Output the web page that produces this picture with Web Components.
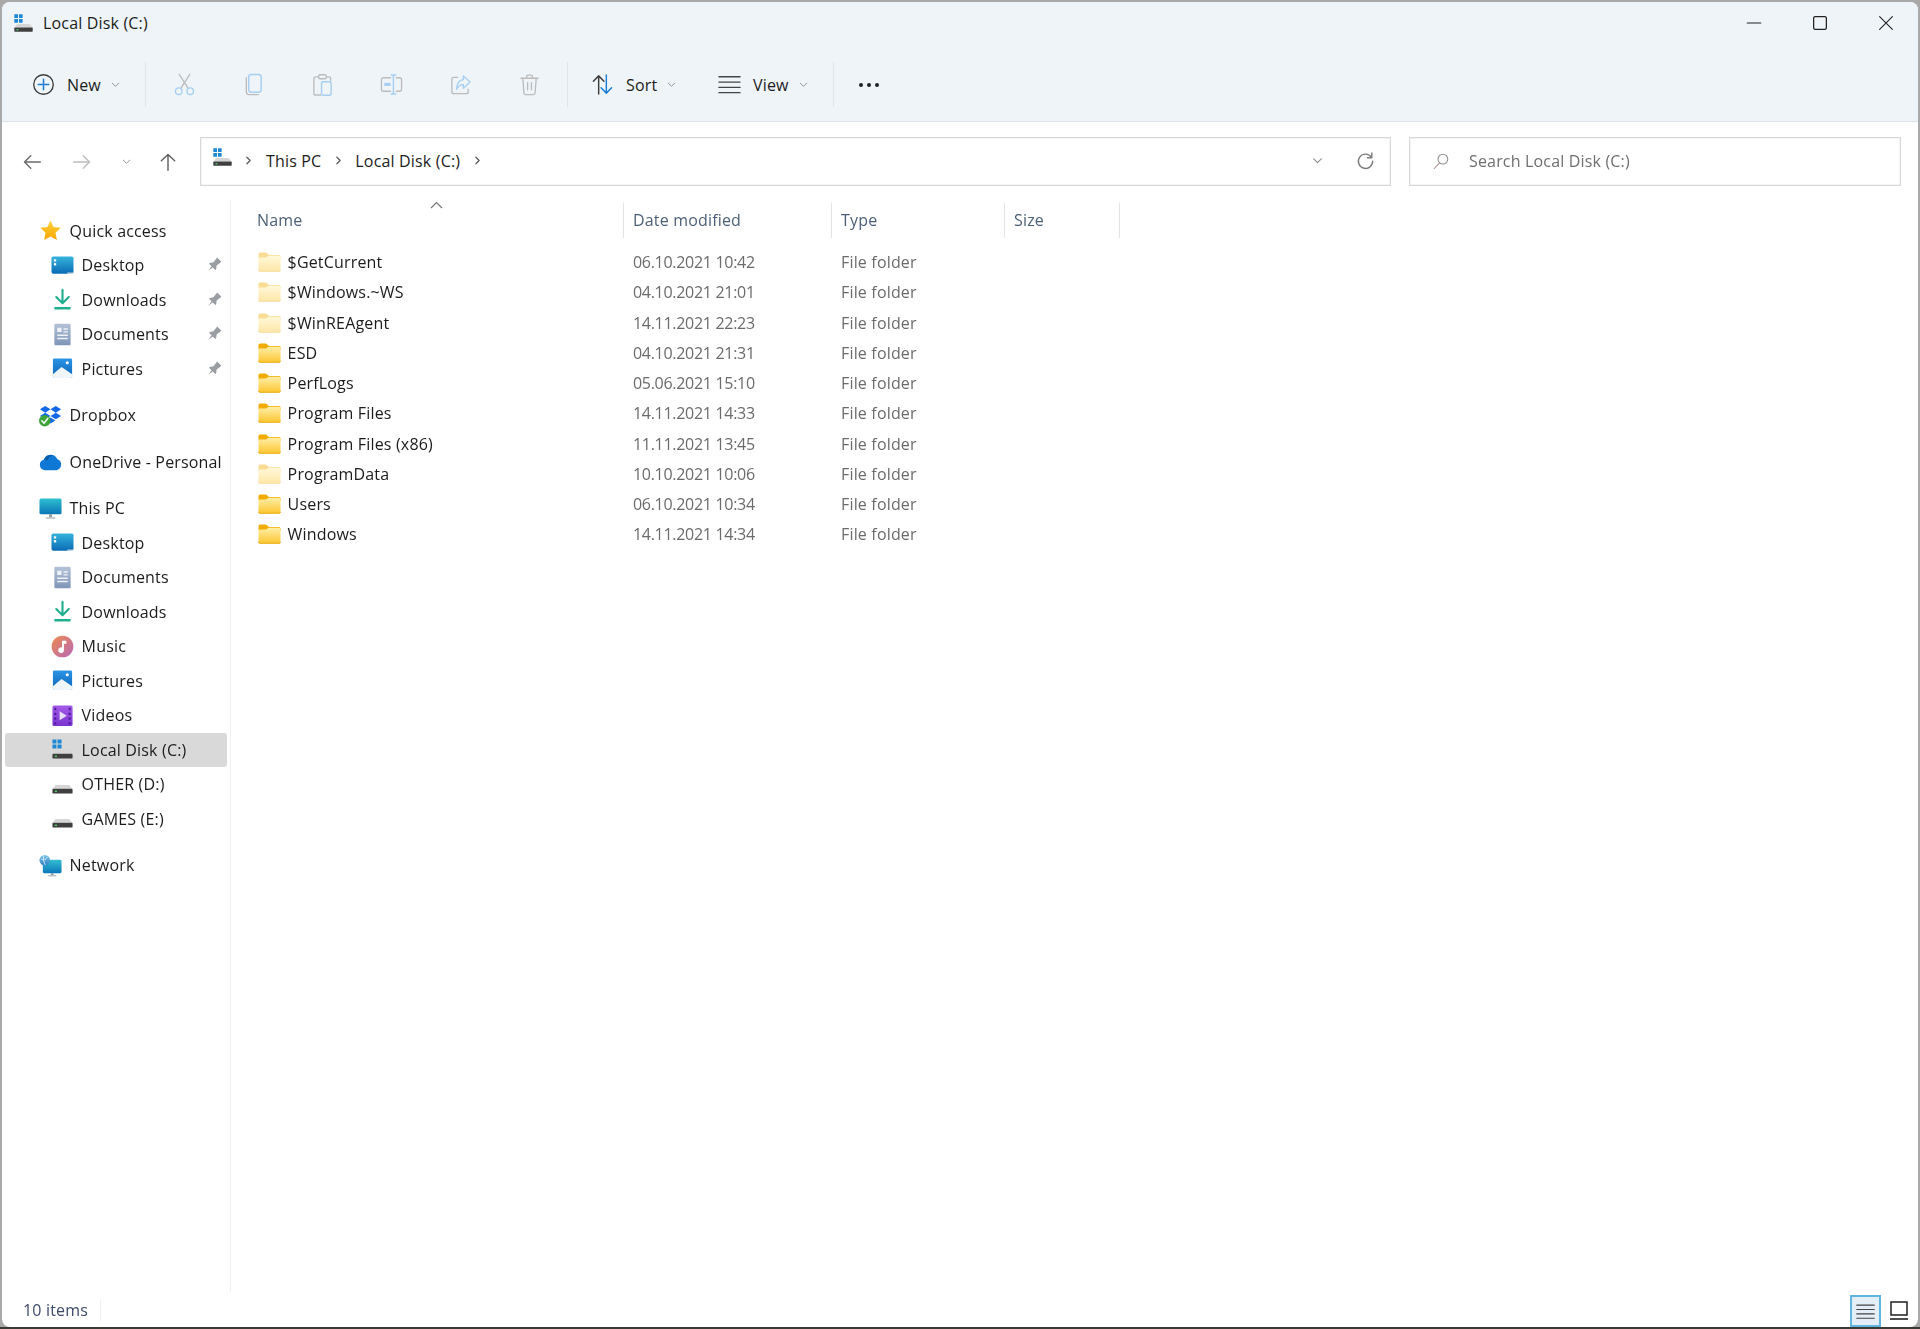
<!DOCTYPE html>
<html lang="en">
<head>
<meta charset="utf-8">
<title>Local Disk (C:)</title>
<style>
  html, body { margin: 0; height: 100%; }
  body {
    overflow: hidden;
    padding: 2px;
    box-sizing: border-box;
    background: linear-gradient(#a9a9a9 1327px, #3a3a35 0);
    font-family: "Open Sans", "Noto Sans", sans-serif;
    font-size: 16px;
    letter-spacing: .17px;
    color: #1c1c1c;
  }
</style>
</head>
<body>
<explorer-window>
  <title-bar slot="top">Local Disk (C:)</title-bar>
  <command-bar slot="top"></command-bar>
  <address-row slot="address"></address-row>
  <nav-pane slot="nav">
    <nav-item icon="star">Quick access</nav-item>
    <nav-item icon="desktop" child pin>Desktop</nav-item>
    <nav-item icon="downloads" child pin>Downloads</nav-item>
    <nav-item icon="documents" child pin>Documents</nav-item>
    <nav-item icon="pictures" child pin>Pictures</nav-item>
    <nav-item icon="dropbox" group>Dropbox</nav-item>
    <nav-item icon="onedrive" group>OneDrive - Personal</nav-item>
    <nav-item icon="thispc" group>This PC</nav-item>
    <nav-item icon="desktop" child>Desktop</nav-item>
    <nav-item icon="documents" child>Documents</nav-item>
    <nav-item icon="downloads" child>Downloads</nav-item>
    <nav-item icon="music" child>Music</nav-item>
    <nav-item icon="pictures" child>Pictures</nav-item>
    <nav-item icon="videos" child>Videos</nav-item>
    <nav-item icon="windrive" child selected>Local Disk (C:)</nav-item>
    <nav-item icon="drive" child>OTHER (D:)</nav-item>
    <nav-item icon="drive" child>GAMES (E:)</nav-item>
    <nav-item icon="network" group>Network</nav-item>
  </nav-pane>
  <file-list slot="files">
    <file-row hidden-file date="06.10.2021 10:42">$GetCurrent</file-row>
    <file-row hidden-file date="04.10.2021 21:01">$Windows.~WS</file-row>
    <file-row hidden-file date="14.11.2021 22:23">$WinREAgent</file-row>
    <file-row date="04.10.2021 21:31">ESD</file-row>
    <file-row date="05.06.2021 15:10">PerfLogs</file-row>
    <file-row date="14.11.2021 14:33">Program Files</file-row>
    <file-row date="11.11.2021 13:45">Program Files (x86)</file-row>
    <file-row hidden-file date="10.10.2021 10:06">ProgramData</file-row>
    <file-row date="06.10.2021 10:34">Users</file-row>
    <file-row date="14.11.2021 14:34">Windows</file-row>
  </file-list>
  <status-bar slot="status">10 items</status-bar>
</explorer-window>

<script>
// all the icons, on a 24 box unless the name says otherwise
const GRAY = '#bcbcbc', PALE = '#a6cef2', DARK = '#3d3d3d', BLUE = '#1a7fd4';
const line = (d, c, w = 1.4) => `<path d="${d}" fill="none" stroke="${c}" stroke-width="${w}" stroke-linecap="round" stroke-linejoin="round"/>`;
const grad = (id, a, b, x2 = 0, y2 = 1) => `<linearGradient id="${id}" x1="0" y1="0" x2="${x2}" y2="${y2}"><stop offset="0" stop-color="${a}"/><stop offset="1" stop-color="${b}"/></linearGradient>`;

const driveBody = `
  <path d="M5 12.5 H19 L22.5 16.5 H1.5 Z" fill="#d6d6d6"/>
  <rect x="1.5" y="16.5" width="21" height="5" rx="1" fill="#3f3f3f"/>
  <rect x="4" y="18.4" width="2.2" height="1.4" fill="#4fd16b"/>`;

const ICONS = {
  plus: `<circle cx="12" cy="12" r="10.2" fill="none" stroke="${DARK}" stroke-width="1.4"/>` + line('M12 6.5 V17.5 M6.5 12 H17.5', BLUE, 1.6),
  cut: line('M6.5 1.5 L15.5 15.5 M17.5 1.5 L8.5 15.5', GRAY) + `<circle cx="6" cy="19" r="3.4" fill="none" stroke="${PALE}" stroke-width="1.4"/><circle cx="18" cy="19" r="3.4" fill="none" stroke="${PALE}" stroke-width="1.4"/>`,
  copy: line('M4.5 5 V19.5 A3 3 0 0 0 7.5 22.5 H17', GRAY) + `<rect x="7" y="1.5" width="13" height="18.5" rx="2.8" fill="none" stroke="${PALE}" stroke-width="1.5"/>`,
  paste: line('M8 4 H5 A2 2 0 0 0 3 6 V21 A2 2 0 0 0 5 23 H10 M16 4 H18.5 A2 2 0 0 1 20.5 6 V8', GRAY) + `<rect x="8" y="1.8" width="8" height="4.2" rx="1.6" fill="none" stroke="${GRAY}" stroke-width="1.4"/><rect x="11" y="9.2" width="10" height="14" rx="1.6" fill="none" stroke="${PALE}" stroke-width="1.5"/>`,
  rename: line('M11 5 H3.5 A2 2 0 0 0 1.5 7 V17 A2 2 0 0 0 3.5 19 H11 M17 5 H20.5 A2 2 0 0 1 22.5 7 V17 A2 2 0 0 1 20.5 19 H17', GRAY) + line('M14 2 V22 M11.5 2 H16.5 M11.5 22 H16.5', PALE, 1.5) + `<rect x="4.5" y="10.3" width="6.5" height="3.2" fill="${PALE}"/>`,
  share: line('M9 4.5 H5 A2 2 0 0 0 3 6.5 V19.5 A2 2 0 0 0 5 21.5 H18 A2 2 0 0 0 20 19.5 V17', GRAY) + line('M15 3 L22 9.5 L15 16 V12.2 C11.5 12 9.5 14 8 17 C8 11 10.5 7.6 15 7 Z', PALE),
  trash: line('M3 5.5 H21 M9 5.5 V3.6 A1.4 1.4 0 0 1 10.4 2.2 H13.6 A1.4 1.4 0 0 1 15 3.6 V5.5 M5 5.5 L6.2 21 A1.8 1.8 0 0 0 8 22.6 H16 A1.8 1.8 0 0 0 17.8 21 L19 5.5 M10 10 V17.5 M14 10 V17.5', GRAY),
  sort: line('M8 22 V3 M2.5 8.5 L8 3 L13.5 8.5', DARK, 1.5) + line('M16 2 V21 M10.5 15.5 L16 21 L21.5 15.5', BLUE, 1.5),
  lines: line('M1 4 H23 M1 9.5 H23 M1 15 H23 M1 20.5 H23', '#444', 1.5),
  dots: `<circle cx="4" cy="12" r="2" fill="#222"/><circle cx="12" cy="12" r="2" fill="#222"/><circle cx="20" cy="12" r="2" fill="#222"/>`,
  chevron: line('M5 9 L12 16 L19 9', '#8a8a8a', 2),
  back: line('M22 12 H3 M10.5 4.5 L3 12 L10.5 19.5', '#6b6b6b', 1.7),
  forward: line('M2 12 H21 M13.5 4.5 L21 12 L13.5 19.5', '#bdbdbd', 1.7),
  up: line('M12 22 V3 M4 10.5 L12 3 L20 10.5', '#5f5f5f', 1.7),
  crumb: line('M9 6 L15 12 L9 18', '#555', 2.2),
  refresh: line('M19.5 8 A9 9 0 1 0 21 13', '#7d7d7d', 1.8) + line('M20 2.5 V8.5 H14.5', '#7d7d7d', 1.8),
  search: `<circle cx="14.5" cy="9.5" r="6.5" fill="none" stroke="#8d8d8d" stroke-width="1.4"/>` + line('M10 14.5 L3 22', '#a68f8f', 1.4),
  minimize: line('M3 12 H21', '#222', 1.6),
  maximize: `<rect x="3.5" y="3.5" width="17" height="17" rx="2.2" fill="none" stroke="#222" stroke-width="1.7"/>`,
  close: line('M3.5 3.5 L20.5 20.5 M20.5 3.5 L3.5 20.5', '#222', 1.5),
  pin: `<g transform="rotate(45 12 12)"><path d="M8 2 H16 L15 10 L18 14 V15.5 H13 L12 23 L11 15.5 H6 V14 L9 10 Z" fill="#9a9ea3"/></g>`,
  star: `<defs>${grad('s', '#ffd23f', '#f7a600')}</defs><path d="M12 1.5 L15.2 8.3 L22.7 9.2 L17.2 14.4 L18.6 21.8 L12 18.2 L5.4 21.8 L6.8 14.4 L1.3 9.2 L8.8 8.3 Z" fill="url(#s)"/>`,
  desktop: `<defs>${grad('d', '#35b4dc', '#0b6bb5')}</defs><rect x="0.5" y="2.5" width="23" height="18" rx="2" fill="url(#d)"/><rect x="3" y="5.5" width="2.4" height="2.4" fill="#fff"/><rect x="3" y="9.5" width="2.4" height="2.4" fill="#fff"/><rect x="17" y="19.4" width="6.5" height="1.2" fill="#dfe9ef"/>`,
  downloads: line('M12 2 V15.5 M5.5 9.5 L12 16 L18.5 9.5', '#1fae8e', 2.2) + `<rect x="3.5" y="19.8" width="17" height="2.6" rx=".6" fill="#1fae8e"/>`,
  documents: `<defs>${grad('o', '#b4c2d6', '#7f95b8')}</defs><rect x="3.5" y="0.8" width="17" height="22.4" rx="1.4" fill="url(#o)"/><path d="M6.5 5 H11 V9.5 H6.5 Z M13 5.5 H17.5 V7 H13 Z M13 8.5 H17.5 V10 H13 Z M6.5 12 H17.5 V13.5 H6.5 Z M6.5 15.5 H17.5 V17 H6.5 Z" fill="#eef2f7"/>`,
  pictures: `<defs>${grad('p', '#2b95e5', '#0d64b8')}</defs><rect x="2" y="1.5" width="20" height="20.5" rx="1.4" fill="url(#p)"/><path d="M2 18 L11 10.5 L22 18 V20.6 A1.4 1.4 0 0 1 20.6 22 H3.4 A1.4 1.4 0 0 1 2 20.6 Z" fill="#f1f6fb"/><circle cx="17" cy="6" r="1.6" fill="#fff"/>`,
  dropbox: `<path d="M6.5 2 L12 5.5 L6.5 9 L1 5.5 Z M17.5 2 L23 5.5 L17.5 9 L12 5.5 Z M6.5 9 L12 12.5 L6.5 16 L1 12.5 Z M17.5 9 L23 12.5 L17.5 16 L12 12.5 Z M12 14 L17 17.2 L12 20.4 L7 17.2 Z" fill="#1268e8"/><circle cx="6" cy="17.5" r="6" fill="#3da53a"/>` + line('M3 17.5 L5.3 20 L9.2 15', '#fff', 1.6),
  onedrive: `<path d="M6 21 A5.5 5.5 0 0 1 5 10.2 A7.5 7.5 0 0 1 19 9.5 A6 6 0 0 1 18.5 21 Z" fill="#0f78d4"/><path d="M5 10.2 A7.5 7.5 0 0 1 14 5.5 Q9 8 9.5 11 Z" fill="#0a5cab"/>`,
  thispc: `<defs>${grad('c', '#2fc0d0', '#0a76b8')}</defs><rect x="0.5" y="1.5" width="23" height="16.5" rx="1.6" fill="url(#c)"/><rect x="10.5" y="18" width="3" height="3" fill="#8f9ba3"/><rect x="7" y="21" width="10" height="1.6" rx=".6" fill="#b4bdc3"/>`,
  music: `<defs>${grad('m', '#ef8a4c', '#b768b8', 1, 1)}</defs><circle cx="12" cy="12" r="11.3" fill="url(#m)"/><path d="M11.5 6 H16 V9 H13.5 V15.5 A3 3 0 1 1 11.5 13 Z" fill="#fff"/>`,
  videos: `<defs>${grad('v', '#a35ae8', '#7a34cf')}</defs><rect x="1.5" y="1.5" width="21" height="21.5" rx="1.6" fill="url(#v)"/><path d="M3.5 4 H5.5 V6.5 H3.5 Z M3.5 9 H5.5 V11.5 H3.5 Z M3.5 14 H5.5 V16.5 H3.5 Z M3.5 19 H5.5 V21 H3.5 Z M18.5 4 H20.5 V6.5 H18.5 Z M18.5 9 H20.5 V11.5 H18.5 Z M18.5 14 H20.5 V16.5 H18.5 Z M18.5 19 H20.5 V21 H18.5 Z" fill="#4b1b96"/><path d="M9 7.5 L16.5 12.3 L9 17 Z" fill="#e8dcfb"/>`,
  drive: driveBody,
  windrive: driveBody + `<path d="M1.5 1.5 H5.7 V5.7 H1.5 Z M6.8 1.5 H11 V5.7 H6.8 Z M1.5 6.8 H5.7 V11 H1.5 Z M6.8 6.8 H11 V11 H6.8 Z" fill="#1e88d6"/>`,
  network: `<defs>${grad('n', '#36bed2', '#0a78ba')}${grad('g', '#7cc4ea', '#2f7fc4')}</defs><rect x="4" y="6" width="19.5" height="14" rx="1.4" fill="url(#n)"/><rect x="12.5" y="20" width="2.6" height="2" fill="#8f9ba3"/><rect x="9.5" y="22" width="8.5" height="1.4" fill="#b4bdc3"/><circle cx="6" cy="6.5" r="5.5" fill="url(#g)"/><path d="M2 5 Q6 8 9 3 M5 1.5 Q3.5 6 6.5 11.5" fill="none" stroke="#d8effa" stroke-width=".9"/>`
};

class WinIcon extends HTMLElement {
  connectedCallback() {
    const size = this.getAttribute('size') || 24;
    const root = this.shadowRoot || this.attachShadow({ mode: 'open' });
    root.innerHTML = `
      <style>:host { display: inline-flex; flex: none; } svg { display: block; }</style>
      <svg width="${size}" height="${size}" viewBox="0 0 24 24">${ICONS[this.getAttribute('name')]}</svg>`;
  }
}
customElements.define('win-icon', WinIcon);

class FolderIcon extends HTMLElement {
  connectedCallback() {
    const root = this.shadowRoot || this.attachShadow({ mode: 'open' });
    root.innerHTML = `
      <style>
        :host { display: inline-flex; flex: none; }
        svg { display: block; }
        :host([pale]) svg { opacity: .42; }
      </style>
      <svg width="23" height="20" viewBox="0 0 23 20">
        <defs><linearGradient id="f" x1="0" y1="0" x2="0" y2="1"><stop offset="0" stop-color="#ffeea6"/><stop offset="1" stop-color="#fcc632"/></linearGradient></defs>
        <path d="M0.5 2 A1.5 1.5 0 0 1 2 .5 H8 L11 3 H21 A1.5 1.5 0 0 1 22.5 4.5 V7 H.5 Z" fill="#f2ab00"/>
        <path d="M.5 5.5 H8 L10.5 3.8 H21 A1.5 1.5 0 0 1 22.5 5.3 V17.8 A1.5 1.5 0 0 1 21 19.3 H2 A1.5 1.5 0 0 1 .5 17.8 Z" fill="url(#f)"/>
        <path d="M.5 17.8 A1.5 1.5 0 0 0 2 19.3 H21 A1.5 1.5 0 0 0 22.5 17.8" fill="none" stroke="#e9a600" stroke-width=".9"/>
      </svg>`;
  }
}
customElements.define('folder-icon', FolderIcon);

const windowTemplate = document.createElement('template');
windowTemplate.innerHTML = `
  <style>
    :host {
      display: flex;
      flex-direction: column;
      height: 1325px;
      background: #fff;
      border-radius: 8px;
      overflow: hidden;
      filter: blur(.3px);
    }
    .top { background: #eff4f9; border-bottom: 1px solid #dfe3e7; height: 119px; flex: none; }
    .main { flex: 1; display: flex; min-height: 0; }
  </style>
  <div class="top"><slot name="top"></slot></div>
  <slot name="address"></slot>
  <div class="main"><slot name="nav"></slot><slot name="files"></slot></div>
  <slot name="status"></slot>
`;
class ExplorerWindow extends HTMLElement {
  constructor() {
    super();
    this.attachShadow({ mode: 'open' }).appendChild(windowTemplate.content.cloneNode(true));
  }
}
customElements.define('explorer-window', ExplorerWindow);

const titleTemplate = document.createElement('template');
titleTemplate.innerHTML = `
  <style>
    :host { display: flex; align-items: center; height: 42px; padding-left: 11px; }
    .label { margin-left: 9px; flex: 1; }
    .ctl { width: 66px; display: flex; justify-content: center; }
    .ctl:last-child { margin-right: -1px; }
  </style>
  <win-icon name="windrive" size="21"></win-icon>
  <span class="label"><slot></slot></span>
  <span class="ctl"><win-icon name="minimize" size="18"></win-icon></span>
  <span class="ctl"><win-icon name="maximize" size="18"></win-icon></span>
  <span class="ctl"><win-icon name="close" size="18"></win-icon></span>
`;
class TitleBar extends HTMLElement {
  constructor() {
    super();
    this.attachShadow({ mode: 'open' }).appendChild(titleTemplate.content.cloneNode(true));
  }
}
customElements.define('title-bar', TitleBar);

class CmdButton extends HTMLElement {
  connectedCallback() {
    const label = this.getAttribute('label');
    const root = this.shadowRoot || this.attachShadow({ mode: 'open' });
    root.innerHTML = `
      <style>
        :host { display: inline-flex; align-items: center; height: 100%; flex: none; box-sizing: border-box; }
        .label { margin-left: 12px; }
        .chev { margin-left: 9px; }
      </style>
      <win-icon name="${this.getAttribute('icon')}" size="${this.getAttribute('size') || 23}"></win-icon>
      ${label ? `<span class="label">${label}</span><win-icon class="chev" name="chevron" size="11"></win-icon>` : ''}`;
  }
}
customElements.define('cmd-button', CmdButton);

const commandTemplate = document.createElement('template');
commandTemplate.innerHTML = `
  <style>
    :host { display: flex; align-items: center; height: 78px; padding-left: 30px; box-sizing: border-box; padding-top: 3px; }
    .sep { width: 1px; height: 45px; background: #dfe4e9; flex: none; }
    .slot { width: 69px; justify-content: center; }
  </style>
  <cmd-button icon="plus" label="New" style="width:113px"></cmd-button>
  <span class="sep"></span>
  <cmd-button class="slot" icon="cut" style="margin-left:4px"></cmd-button>
  <cmd-button class="slot" icon="copy"></cmd-button>
  <cmd-button class="slot" icon="paste"></cmd-button>
  <cmd-button class="slot" icon="rename"></cmd-button>
  <cmd-button class="slot" icon="share"></cmd-button>
  <cmd-button class="slot" icon="trash"></cmd-button>
  <span class="sep" style="margin-left:3px"></span>
  <cmd-button icon="sort" label="Sort" style="margin-left:23px;width:127px"></cmd-button>
  <cmd-button icon="lines" label="View" style="width:115px"></cmd-button>
  <span class="sep"></span>
  <cmd-button icon="dots" size="24" style="margin-left:23px"></cmd-button>
`;
class CommandBar extends HTMLElement {
  constructor() {
    super();
    this.attachShadow({ mode: 'open' }).appendChild(commandTemplate.content.cloneNode(true));
  }
}
customElements.define('command-bar', CommandBar);

const addressTemplate = document.createElement('template');
addressTemplate.innerHTML = `
  <style>
    :host { display: flex; padding: 15px 0 12px 5px; height: 49px; flex: none; align-items: stretch; }
    .nav { display: flex; align-items: center; justify-content: center; flex: none; }
    .box {
      display: flex;
      align-items: center;
      border: 1px solid #d8d8d8;
      box-shadow: inset 0 0 0 .5px #ececec;
      background: #fff;
      box-sizing: border-box;
      height: 49px;
      padding-bottom: 2px;
    }
    .addr { width: 1191px; margin-left: 9px; padding-left: 11px; }
    .addr .grow { flex: 1; }
    .crumb { margin: 0 10px 0 11px; display: inline-flex; }
    .crumb.first { margin: 0 11px 0 9px; }
    .search { width: 492px; margin-left: 18px; padding-left: 22px; color: #6f6f6f; }
    .search span { margin-left: 19px; }
  </style>
  <span class="nav" style="width:50px"><win-icon name="back" size="20"></win-icon></span>
  <span class="nav" style="width:50px"><win-icon name="forward" size="20"></win-icon></span>
  <span class="nav" style="width:38px"><win-icon name="chevron" size="11"></win-icon></span>
  <span class="nav" style="width:46px"><win-icon name="up" size="20"></win-icon></span>
  <div class="box addr">
    <win-icon name="windrive" size="21" style="margin-top:-6px"></win-icon>
    <win-icon class="crumb first" name="crumb" size="13"></win-icon><span>This PC</span>
    <win-icon class="crumb" name="crumb" size="13"></win-icon><span>Local Disk (C:)</span>
    <win-icon class="crumb" name="crumb" size="13"></win-icon>
    <span class="grow"></span>
    <win-icon name="chevron" size="13"></win-icon>
    <win-icon name="refresh" size="19" style="margin:0 15px 0 32px"></win-icon>
  </div>
  <div class="box search">
    <win-icon name="search" size="18"></win-icon><span>Search Local Disk (C:)</span>
  </div>
`;
class AddressRow extends HTMLElement {
  constructor() {
    super();
    this.attachShadow({ mode: 'open' }).appendChild(addressTemplate.content.cloneNode(true));
  }
}
customElements.define('address-row', AddressRow);

const navTemplate = document.createElement('template');
navTemplate.innerHTML = `
  <style>
    :host {
      display: block;
      width: 228px;
      flex: none;
      padding-top: 13.5px;
      border-right: 1px solid #f0f0f0;
      margin-top: 2px;
    }
  </style>
  <slot></slot>
`;
class NavPane extends HTMLElement {
  constructor() {
    super();
    this.attachShadow({ mode: 'open' }).appendChild(navTemplate.content.cloneNode(true));
  }
}
customElements.define('nav-pane', NavPane);

class NavItem extends HTMLElement {
  connectedCallback() {
    const root = this.shadowRoot || this.attachShadow({ mode: 'open' });
    root.innerHTML = `
      <style>
        :host { display: flex; align-items: center; height: 34.5px; margin: 0 3px; padding-left: 34px; border-radius: 3px; position: relative; color: #1c1c1c; }
        :host([child]) { padding-left: 46px; }
        :host([group]) { margin-top: 12px; }
        :host([selected]) { background: #d9d9d9; }
        .text { margin-left: 7.6px; flex: 1; white-space: nowrap; }
        .pin { margin-right: 4px; }
      </style>
      <win-icon name="${this.getAttribute('icon')}" size="23"></win-icon>
      <span class="text"><slot></slot></span>
      ${this.hasAttribute('pin') ? '<win-icon class="pin" name="pin" size="18"></win-icon>' : ''}`;
  }
}
customElements.define('nav-item', NavItem);

const GRID = 'grid-template-columns: 393px 208px 173px 115px;';

const listTemplate = document.createElement('template');
listTemplate.innerHTML = `
  <style>
    :host { display: block; flex: 1; padding-top: 5px; position: relative; }
    .head { display: grid; ${GRID} height: 35px; align-items: stretch; color: #4d5f78; }
    .head span { display: flex; align-items: center; border-right: 1px solid #e4e4e4; padding-bottom: 2px; box-sizing: border-box; }
    .rows { margin-top: 9px; }
    .sort { position: absolute; left: 199px; top: 3px; }
  </style>
  <div class="head">
    <span style="padding-left:26px">Name</span>
    <span style="padding-left:9px">Date modified</span>
    <span style="padding-left:9px">Type</span>
    <span style="padding-left:9px">Size</span>
  </div>
  <svg class="sort" width="13" height="8" viewBox="0 0 13 8"><path d="M1 7 L6.5 1.5 L12 7" fill="none" stroke="#777" stroke-width="1.2"/></svg>
  <div class="rows"><slot></slot></div>
`;
class FileList extends HTMLElement {
  constructor() {
    super();
    this.attachShadow({ mode: 'open' }).appendChild(listTemplate.content.cloneNode(true));
  }
}
customElements.define('file-list', FileList);

class FileRow extends HTMLElement {
  connectedCallback() {
    const root = this.shadowRoot || this.attachShadow({ mode: 'open' });
    root.innerHTML = `
      <style>
        :host { display: grid; ${GRID} height: 30.25px; align-items: center; }
        .name { display: flex; align-items: center; padding-left: 27px; }
        .name span { margin-left: 6.6px; white-space: nowrap; }
        .date { padding-left: 9px; color: #6b6b6b; letter-spacing: -.3px; white-space: nowrap; }
        .type { padding-left: 9px; color: #6b6b6b; }
      </style>
      <div class="name"><folder-icon ${this.hasAttribute('hidden-file') ? 'pale' : ''}></folder-icon><span><slot></slot></span></div>
      <div class="date">${this.getAttribute('date')}</div>
      <div class="type">File folder</div>`;
  }
}
customElements.define('file-row', FileRow);

const statusTemplate = document.createElement('template');
statusTemplate.innerHTML = `
  <style>
    :host { display: flex; align-items: center; height: 35px; flex: none; padding-left: 21px; color: #3e4a6b; }
    .text { width: 77px; white-space: nowrap; }
    .sep { width: 1px; height: 22px; background: #f0f0f0; }
    .grow { flex: 1; }
    .toggle { display: flex; align-items: center; justify-content: center; width: 31px; height: 32px; box-sizing: border-box; margin-top: 3px; }
    .on { background: #e3eef8; border: 2px solid #5fb4e0; margin-right: 2px; }
    .off { width: 31px; margin-right: 4px; }
    .tile { width: 18px; height: 20px; }
  </style>
  <span class="text"><slot></slot></span>
  <span class="sep"></span>
  <span class="grow"></span>
  <span class="toggle on"><win-icon name="lines" size="19"></win-icon></span>
  <span class="toggle off">
    <svg class="tile" viewBox="0 0 18 20"><rect x="1" y="1" width="16" height="13" fill="none" stroke="#222" stroke-width="1.5"/><path d="M0 18 H18" stroke="#222" stroke-width="1.6"/></svg>
  </span>
`;
class StatusBar extends HTMLElement {
  constructor() {
    super();
    this.attachShadow({ mode: 'open' }).appendChild(statusTemplate.content.cloneNode(true));
  }
}
customElements.define('status-bar', StatusBar);
</script>
</body>
</html>
